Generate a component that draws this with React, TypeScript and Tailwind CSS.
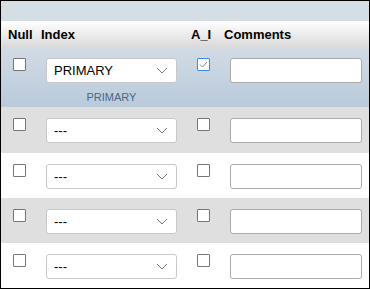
import React from "react";

function Box({ checked = false }: { checked?: boolean }) {
  return (
    <div
      className={
        "w-[13px] h-[13px] bg-white rounded-[1px] border flex items-center justify-center " +
        (checked ? "border-[#3b8de0]" : "border-[#767676]")
      }
    >
      {checked && (
        <svg width="9" height="7" viewBox="0 0 9 7">
          <path d="M1 3.5 L3.5 6 L8 1" fill="none" stroke="#8a8a8a" strokeWidth="1" />
        </svg>
      )}
    </div>
  );
}

function Select({ value }: { value: string }) {
  return (
    <div className="w-[131px] h-[25px] bg-white border border-[#c8c8c8] rounded-[3px] flex items-center justify-between pl-[7px] pr-[8px] text-[13px] text-black">
      <span>{value}</span>
      <svg width="12" height="7" viewBox="0 0 12 7">
        <path d="M1 1 L6 6 L11 1" fill="none" stroke="#777" strokeWidth="1" />
      </svg>
    </div>
  );
}

function Input() {
  return <div className="w-[132px] h-[25px] bg-white border border-[#aaaaaa] rounded-[3px]" />;
}

const rows = [
  { bg: "bg-[#dfdfdf]", h: "h-[46px]" },
  { bg: "bg-white", h: "h-[45px]" },
  { bg: "bg-[#dfdfdf]", h: "h-[45px]" },
  { bg: "bg-white", h: "h-[45px]" },
];

export default function App() {
  return (
    <div
      className="w-[370px] h-[289px] border border-black bg-white overflow-hidden flex flex-col"
      style={{ fontFamily: '"Liberation Sans", Arial, sans-serif' }}
    >
      <div className="h-[20px] bg-[#d5dde5]" />
      <div className="h-[27px] flex items-center bg-gradient-to-b from-white to-[#d9d9d9] text-[13px] font-bold text-black">
        <div className="w-[35px] pl-[7px]">Null</div>
        <div className="w-[149px] pl-[5px]">Index</div>
        <div className="w-[34px] pl-[6px]">A_I</div>
        <div className="flex-1 pl-[5px]">Comments</div>
      </div>
      <div className="h-[59px] flex bg-gradient-to-b from-[#d2dbe4] to-[#b9cadb] pt-[10px]">
        <div className="w-[35px] pl-[12px]">
          <Box />
        </div>
        <div className="w-[149px] pl-[10px] flex flex-col">
          <Select value="PRIMARY" />
          <div className="w-[131px] text-center text-[11px] text-[#4a6688] mt-[9px] leading-none">PRIMARY</div>
        </div>
        <div className="w-[34px] pl-[12px]">
          <Box checked />
        </div>
        <div className="flex-1 pl-[11px]">
          <Input />
        </div>
      </div>
      {rows.map((r, i) => (
        <div key={i} className={"flex pt-[11px] " + r.bg + " " + r.h}>
          <div className="w-[35px] pl-[12px]">
            <Box />
          </div>
          <div className="w-[149px] pl-[10px]">
            <Select value="---" />
          </div>
          <div className="w-[34px] pl-[12px]">
            <Box />
          </div>
          <div className="flex-1 pl-[11px]">
            <Input />
          </div>
        </div>
      ))}
    </div>
  );
}
